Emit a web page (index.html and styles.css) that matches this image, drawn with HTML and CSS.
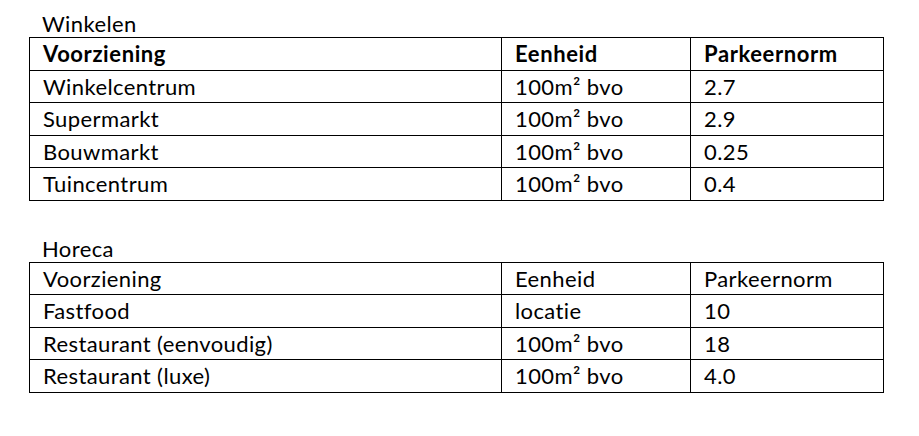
FILE: index.html
```html
<!DOCTYPE html>
<html lang="nl">
<head>
<meta charset="utf-8">
<title>Parkeernormen</title>
<link rel="stylesheet" href="styles.css">
</head>
<body>
<div class="page">
  <section class="section">
    <div class="label">Winkelen</div>
    <table class="norm">
      <colgroup><col class="c1"><col class="c2"><col class="c3"></colgroup>
      <tr class="head"><td>Voorziening</td><td>Eenheid</td><td>Parkeernorm</td></tr>
      <tr><td>Winkelcentrum</td><td>100m² bvo</td><td>2.7</td></tr>
      <tr><td>Supermarkt</td><td>100m² bvo</td><td>2.9</td></tr>
      <tr><td>Bouwmarkt</td><td>100m² bvo</td><td>0.25</td></tr>
      <tr><td>Tuincentrum</td><td>100m² bvo</td><td>0.4</td></tr>
    </table>
  </section>
  <section class="section">
    <div class="label">Horeca</div>
    <table class="norm">
      <colgroup><col class="c1"><col class="c2"><col class="c3"></colgroup>
      <tr><td>Voorziening</td><td>Eenheid</td><td>Parkeernorm</td></tr>
      <tr><td>Fastfood</td><td>locatie</td><td>10</td></tr>
      <tr><td>Restaurant (eenvoudig)</td><td>100m² bvo</td><td>18</td></tr>
      <tr><td>Restaurant (luxe)</td><td>100m² bvo</td><td>4.0</td></tr>
    </table>
  </section>
</div>
</body>
</html>
```
FILE: styles.css
```css
html, body {
  margin: 0;
  padding: 0;
  background: #ffffff;
}
body {
  font-family: Lato, "Liberation Sans", sans-serif;
  font-size: 22px;
  letter-spacing: 0.4px;
  color: #000000;
}
.page {
  display: flex;
  flex-direction: column;
  gap: 35px;
  padding: 11px 0 0 29px;
}
.label {
  height: 26px;
  line-height: 26px;
  padding-left: 13px;
}
.norm {
  border-collapse: collapse;
  table-layout: fixed;
  width: 854px;
}
.c1 { width: 472px; }
.c2 { width: 189px; }
.c3 { width: 193px; }
.norm td {
  border: 1px solid #000000;
  height: 31.5px;
  padding: 0 0 0 13px;
  line-height: 31px;
  vertical-align: middle;
  white-space: nowrap;
}
.head td {
  font-weight: bold;
  letter-spacing: 0.6px;
}
```
